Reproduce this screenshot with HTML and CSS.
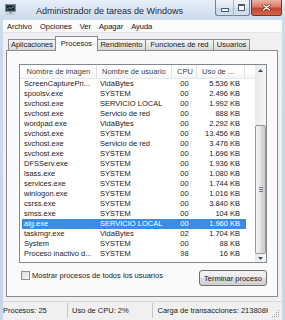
FILE: index.html
```html
<!DOCTYPE html>
<html lang="es">
<head>
    <meta charset="UTF-8">
    <meta name="viewport" content="width=device-width, initial-scale=1.0">
    <title>Administrador de tareas de Windows</title>
    <link rel="stylesheet" href="styles.css">
</head>
<body>
    <div class="window">
        <!-- Title bar -->
        <div class="titlebar">
            <svg class="app-icon" width="11" height="11" viewBox="0 0 11 11">
                <rect x="0.5" y="0.5" width="10" height="7" fill="#34445a" stroke="#7d8898"/>
                <rect x="2" y="2" width="7" height="4" fill="#172030"/>
                <path d="M2 5.5 L4 3.5 L6 4.5 L9 2.5" stroke="#7cc66a" stroke-width="0.8" fill="none"/>
                <rect x="4" y="8" width="3" height="1.2" fill="#8d96a1"/>
                <rect x="1.5" y="9.3" width="8" height="1.5" fill="#b9c0c8"/>
            </svg>
            <span class="title">Administrador de tareas de Windows</span>
            <div class="caption-buttons">
                <span class="cap-btn cap-min"><i></i></span>
                <span class="cap-btn cap-max"><i></i></span>
                <span class="cap-btn cap-close">
                    <svg width="9" height="7" viewBox="0 0 9 7">
                        <path d="M1.5 1 L7.5 6 M7.5 1 L1.5 6" stroke="#5a1c12" stroke-width="2.6" stroke-linecap="round"/>
                        <path d="M1.5 1 L7.5 6 M7.5 1 L1.5 6" stroke="#ffffff" stroke-width="1.5" stroke-linecap="round"/>
                    </svg>
                </span>
            </div>
        </div>

        <div class="client">
            <!-- Menu -->
            <ul class="menubar">
                <li>Archivo</li>
                <li>Opciones</li>
                <li>Ver</li>
                <li>Apagar</li>
                <li>Ayuda</li>
            </ul>

            <div class="body">
                <!-- Tabs -->
                <div class="tabs">
                    <span class="tab tab-apps">Aplicaciones</span>
                    <span class="tab tab-procs active">Procesos</span>
                    <span class="tab tab-perf">Rendimiento</span>
                    <span class="tab tab-net">Funciones de red</span>
                    <span class="tab tab-users">Usuarios</span>
                </div>

                <div class="panel">
                    <!-- Process list -->
                    <div class="listview">
                        <div class="list-main">
                            <div class="list-header">
                                <span class="hcell h-name">Nombre de imagen</span>
                                <span class="hcell h-user">Nombre de usuario</span>
                                <span class="hcell h-cpu">CPU</span>
                                <span class="hcell h-mem">Uso de ...</span>
                            </div>
                            <div class="rows" id="rows"></div>
                        </div>
                        <div class="scrollbar">
                            <div class="sb-btn sb-up">
                                <svg width="5" height="3" viewBox="0 0 5 3"><path d="M0 3 L2.5 0 L5 3 Z" fill="#3d4f6e"/></svg>
                            </div>
                            <div class="sb-track">
                                <div class="sb-thumb">
                                    <svg width="4" height="5" viewBox="0 0 4 5">
                                        <path d="M0 0.5 H4 M0 2.5 H4 M0 4.5 H4" stroke="#6f7a86" stroke-width="1"/>
                                    </svg>
                                </div>
                            </div>
                            <div class="sb-btn sb-down">
                                <svg width="5" height="3" viewBox="0 0 5 3"><path d="M0 0 L2.5 3 L5 0 Z" fill="#3d4f6e"/></svg>
                            </div>
                        </div>
                    </div>

                    <div class="actions">
                        <label class="check">
                            <span class="checkbox"></span>
                            <span>Mostrar procesos de todos los usuarios</span>
                        </label>
                        <button class="button" type="button">Terminar proceso</button>
                    </div>
                </div>
            </div>

            <!-- Status bar -->
            <div class="statusbar">
                <span class="st st-procs">Procesos: 25</span>
                <span class="st st-cpu">Uso de CPU: 2%</span>
                <span class="st st-mem">Carga de transacciones: 213808K / 2457612K</span>
                <span class="grip">
                    <svg width="8" height="8" viewBox="0 0 8 8">
                        <g fill="#a0a0a0">
                            <rect x="6" y="0" width="1" height="1"/>
                            <rect x="4" y="2" width="1" height="1"/><rect x="6" y="2" width="1" height="1"/>
                            <rect x="2" y="4" width="1" height="1"/><rect x="4" y="4" width="1" height="1"/><rect x="6" y="4" width="1" height="1"/>
                            <rect x="0" y="6" width="1" height="1"/><rect x="2" y="6" width="1" height="1"/><rect x="4" y="6" width="1" height="1"/><rect x="6" y="6" width="1" height="1"/>
                        </g>
                    </svg>
                </span>
            </div>
        </div>
    </div>

    <script>
        // Running processes shown in the list
        const processes = [
            { name: "ScreenCapturePri...", user: "VidaBytes", cpu: "00", mem: "5.536 KB" },
            { name: "spoolsv.exe", user: "SYSTEM", cpu: "00", mem: "2.496 KB" },
            { name: "svchost.exe", user: "SERVICIO LOCAL", cpu: "00", mem: "1.992 KB" },
            { name: "svchost.exe", user: "Servicio de red", cpu: "00", mem: "888 KB" },
            { name: "wordpad.exe", user: "VidaBytes", cpu: "00", mem: "2.292 KB" },
            { name: "svchost.exe", user: "SYSTEM", cpu: "00", mem: "13.456 KB" },
            { name: "svchost.exe", user: "Servicio de red", cpu: "00", mem: "3.476 KB" },
            { name: "svchost.exe", user: "SYSTEM", cpu: "00", mem: "1.696 KB" },
            { name: "DFSServ.exe", user: "SYSTEM", cpu: "00", mem: "1.936 KB" },
            { name: "lsass.exe", user: "SYSTEM", cpu: "00", mem: "1.080 KB" },
            { name: "services.exe", user: "SYSTEM", cpu: "00", mem: "1.744 KB" },
            { name: "winlogon.exe", user: "SYSTEM", cpu: "00", mem: "1.016 KB" },
            { name: "csrss.exe", user: "SYSTEM", cpu: "00", mem: "3.840 KB" },
            { name: "smss.exe", user: "SYSTEM", cpu: "00", mem: "104 KB" },
            { name: "alg.exe", user: "SERVICIO LOCAL", cpu: "00", mem: "1.960 KB", selected: true },
            { name: "taskmgr.exe", user: "VidaBytes", cpu: "02", mem: "1.704 KB" },
            { name: "System", user: "SYSTEM", cpu: "00", mem: "88 KB" },
            { name: "Proceso inactivo d...", user: "SYSTEM", cpu: "98", mem: "16 KB" }
        ];

        const rows = document.getElementById("rows");

        processes.forEach(function (p) {
            const row = document.createElement("div");
            row.className = p.selected ? "row selected" : "row";
            row.innerHTML =
                '<span class="c-name">' + p.name + '</span>' +
                '<span class="c-user">' + p.user + '</span>' +
                '<span class="c-cpu">' + p.cpu + '</span>' +
                '<span class="c-mem">' + p.mem + '</span>';
            rows.appendChild(row);
        });
    </script>
</body>
</html>
```

FILE: styles.css
```css
/* Page */
body {
    margin: 0;
    width: 285px;
    height: 320px;
    overflow: hidden;
    font-family: "Liberation Sans", Arial, sans-serif;
    font-size: 7.5px;
    color: #111;
    background: #cbd9ea;
}

/* Window frame */
.window {
    height: 320px;
    box-sizing: border-box;
    padding: 0 3px;
    display: flex;
    flex-direction: column;
    background: linear-gradient(#e7eef8, #ccdaeb 20px, #c7d6e9);
}

.titlebar {
    height: 20px;
    flex-shrink: 0;
    display: flex;
    align-items: flex-start;
}

.app-icon {
    margin: 4px 0 0 2px;
}

.title {
    margin: 4px 0 0 20px;
    font-size: 9px;
    line-height: 15px;
    color: #1b2a3c;
    white-space: nowrap;
}

/* Caption buttons */
.caption-buttons {
    margin-left: auto;
    display: flex;
    gap: 1px;
    height: 16px;
}

.cap-btn {
    box-sizing: border-box;
    height: 16px;
    display: flex;
    align-items: center;
    justify-content: center;
    border: 1px solid #6f819b;
    border-top: none;
    background: linear-gradient(#f1f5fa, #dbe4ef 50%, #c9d5e4 51%, #d6e0ec);
}

.cap-min {
    width: 18px;
    border-radius: 0 0 0 3px;
    border-right: none;
}

.cap-max {
    width: 17px;
    border-radius: 0 0 3px 0;
    margin-left: -1px;
    border-left: 1px solid #a6b4c6;
}

.cap-min i {
    width: 6px;
    height: 2px;
    margin-top: 5px;
    border: 1px solid #4a5a70;
    background: #fff;
}

.cap-max i {
    width: 5px;
    height: 4px;
    border: 1px solid #4a5a70;
    border-top-width: 2px;
    background: #fff;
}

.cap-close {
    width: 31px;
    border-color: #7a3328;
    border-radius: 0 0 3px 3px;
    background: linear-gradient(#eab3a5, #d97a66 45%, #c4452e 55%, #d4654c);
}

/* Client area */
.client {
    flex: 1;
    min-height: 0;
    display: flex;
    flex-direction: column;
    background: #f0f0f0;
}

.menubar {
    list-style: none;
    margin: 0;
    padding: 0;
    height: 12px;
    display: flex;
    background: #fbfbfc;
    border-bottom: 1px solid #e1e5ea;
}

.menubar li {
    padding: 0 4px;
    line-height: 13px;
}

.body {
    flex: 1;
    min-height: 0;
    display: flex;
    flex-direction: column;
    padding: 3px 4px 4px 3px;
}

/* Tabs */
.tabs {
    height: 14px;
    flex-shrink: 0;
    display: flex;
    align-items: flex-end;
    padding-left: 2px;
}

.tab {
    box-sizing: border-box;
    height: 11px;
    line-height: 10px;
    text-align: center;
    white-space: nowrap;
    border: 1px solid #898c95;
    border-bottom: none;
    margin-left: -1px;
    background: linear-gradient(#f6f6f6, #e6e6e6 50%, #dadada);
    color: #1a1a1a;
}

.tab-apps { width: 48px; margin-left: 0; }
.tab-procs { width: 43px; }
.tab-perf { width: 49px; }
.tab-net { width: 69px; }
.tab-users { width: 37px; }

.tab.active {
    position: relative;
    z-index: 1;
    height: 15px;
    line-height: 13px;
    margin-bottom: -1px;
    background: #fafafa;
}

.panel {
    flex: 1;
    min-height: 0;
    display: flex;
    flex-direction: column;
    gap: 7px;
    padding: 13px 10px 10px 12px;
    border: 1px solid #898c95;
    background: #fafafa;
}

/* List view */
.listview {
    height: 199px;
    box-sizing: border-box;
    flex-shrink: 0;
    display: flex;
    border: 1px solid #828790;
    background: #fff;
}

.list-main {
    flex: 1;
    min-width: 0;
}

.list-header {
    display: flex;
    height: 13px;
    border-bottom: 1px solid #e5e8ec;
    background: linear-gradient(#ffffff, #ffffff 60%, #f3f4f6);
}

.hcell {
    box-sizing: border-box;
    padding-left: 5px;
    line-height: 13px;
    white-space: nowrap;
    overflow: hidden;
    color: #34404f;
    border-right: 1px solid #dfe3e8;
}

.h-name { width: 77px; padding-left: 6.5px; }
.h-user { width: 75px; }
.h-cpu { width: 25px; }
.h-mem { width: 48px; }

.row {
    display: grid;
    grid-template-columns: 75px 75px 25px 49px;
    width: 224px;
    margin-left: 2px;
    height: 10px;
    line-height: 10px;
    color: #1b1b1b;
}

.row span {
    white-space: nowrap;
    overflow: hidden;
}

.row.selected {
    background: #3a8de0;
    color: #fff;
}

.c-name { padding-left: 2px; }
.c-user { padding-left: 3px; }
.c-cpu { text-align: center; }
.c-mem { text-align: right; padding-right: 6px; }

/* Scrollbar */
.scrollbar {
    width: 11px;
    flex-shrink: 0;
    display: flex;
    flex-direction: column;
    background: linear-gradient(90deg, #e9e9e9, #f7f7f7);
}

.sb-btn {
    display: flex;
    align-items: center;
    justify-content: center;
}

.sb-up { height: 11px; }
.sb-down { height: 8px; }

.sb-track {
    flex: 1;
    display: flex;
    flex-direction: column;
    padding-top: 49px;
}

.sb-thumb {
    flex: 1;
    display: flex;
    align-items: center;
    justify-content: center;
    border: 1px solid #979797;
    border-radius: 2px;
    background: linear-gradient(90deg, #f4f4f4, #e6e6e6 50%, #d9d9d9 51%, #cfcfcf);
}

/* Bottom controls */
.actions {
    height: 16px;
    display: flex;
    align-items: flex-start;
}

.check {
    display: flex;
    align-items: center;
    gap: 2px;
    margin: 1px 0 0 2px;
    line-height: 9px;
    color: #1a1a1a;
}

.checkbox {
    width: 9px;
    height: 9px;
    box-sizing: border-box;
    border: 1px solid #8e8f8f;
    background: linear-gradient(135deg, #dcdcdc, #f7f7f7);
}

.button {
    margin-left: auto;
    width: 68px;
    height: 16px;
    padding: 1px 0 0;
    font-family: inherit;
    font-size: 7.5px;
    line-height: 13px;
    color: #1a1a1a;
    border: 1px solid #707070;
    border-radius: 3px;
    background: linear-gradient(#f2f2f2, #ebebeb 50%, #dddddd 51%, #cfcfcf);
}

/* Status bar */
.statusbar {
    height: 18px;
    flex-shrink: 0;
    display: flex;
    border-top: 1px solid #d7d7d7;
    background: #f0f0f0;
    line-height: 15px;
    color: #1a1a1a;
}

.st {
    box-sizing: border-box;
    white-space: nowrap;
    overflow: hidden;
    border-right: 1px solid #c5c5c5;
    margin: 1px 0 2px;
}

.st-procs { width: 65px; }
.st-cpu { width: 85px; padding-left: 4px; }
.st-mem { width: 115px; padding-left: 4.5px; border-right: none; }

.grip {
    flex: 1;
    display: flex;
    align-items: flex-end;
    justify-content: flex-end;
    padding: 0 2px 2px 0;
}
```
